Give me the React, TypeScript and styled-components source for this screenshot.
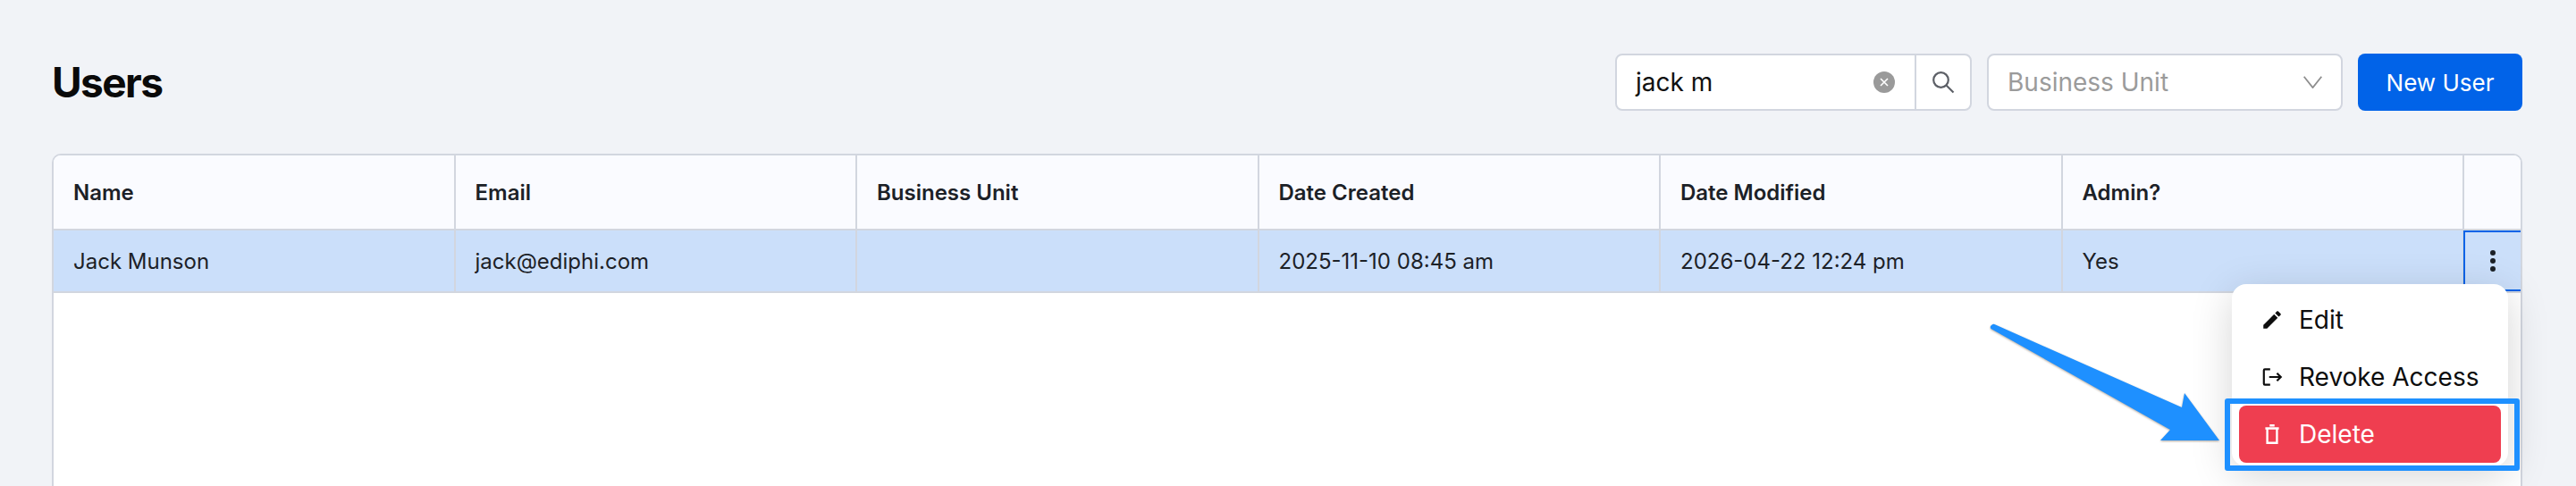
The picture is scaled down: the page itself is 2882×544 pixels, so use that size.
import React from "react";
import styled, { createGlobalStyle } from "styled-components";

const Global = createGlobalStyle`
  html, body { margin: 0; padding: 0; height: 544px; overflow: hidden; background: #f1f3f7; }
  body { font-family: Inter, "Liberation Sans", sans-serif; }
  * { box-sizing: border-box; }
`;

const Page = styled.div`
  position: relative;
  width: 2882px;
  height: 544px;
  overflow: hidden;
  padding: 60px 60px 0 58px;
`;

const Header = styled.header`
  display: flex;
  align-items: center;
  justify-content: space-between;
  height: 64px;
  margin-bottom: 48px;
`;

const Title = styled.h1`
  margin: 0;
  font-size: 46px;
  font-weight: 700;
  line-height: 1;
  letter-spacing: -1.6px;
  color: #0a0a0a;
`;

const Controls = styled.div`
  display: flex;
  align-items: stretch;
  gap: 17px;
  height: 64px;
`;

const SearchGroup = styled.div`
  display: flex;
  width: 399px;
  background: #fff;
  border: 2px solid #d2d6df;
  border-radius: 8px;
`;

const SearchField = styled.div`
  flex: 1;
  display: flex;
  align-items: center;
  justify-content: space-between;
  padding: 0 22px 0 21px;
  font-size: 28px;
  color: #111;
`;

const SearchButton = styled.div`
  width: 62px;
  display: flex;
  align-items: center;
  justify-content: center;
  border-left: 2px solid #d2d6df;
  color: #5c5f66;
`;

const ClearBadge = styled.span`
  width: 24px;
  height: 24px;
  border-radius: 50%;
  background: #9a9a9a;
  display: flex;
  align-items: center;
  justify-content: center;
`;

const SelectBox = styled.div`
  width: 398px;
  display: flex;
  align-items: center;
  justify-content: space-between;
  padding: 0 21px;
  background: #fff;
  border: 2px solid #d2d6df;
  border-radius: 8px;
  font-size: 28px;
  color: #9b9b9b;
`;

const PrimaryButton = styled.button`
  width: 184px;
  border: none;
  border-radius: 8px;
  background: #0163e8;
  color: #fff;
  font-family: inherit;
  font-size: 26px;
  font-weight: 400;
`;

const Table = styled.div`
  height: 500px;
  background: #fff;
  border: 2px solid #d2d6df;
  border-radius: 10px 10px 0 0;
  overflow: hidden;
`;

const Row = styled.div`
  display: grid;
  grid-template-columns: repeat(6, 1fr) 63px;
`;

const HeadCell = styled.div`
  height: 84px;
  display: flex;
  align-items: center;
  padding: 0 22px;
  background: #fafbff;
  border-right: 2px solid #d2d6df;
  border-bottom: 2px solid #d2d6df;
  font-size: 24px;
  font-weight: 600;
  color: #1c2127;
  &:last-child { border-right: none; }
`;

const BodyCell = styled.div`
  height: 70px;
  display: flex;
  align-items: center;
  padding: 0 22px;
  background: #cbdffa;
  border-right: 2px solid #d2d6df;
  border-bottom: 2px solid #d2d6df;
  font-size: 24px;
  color: #1c2127;
`;

const ActionCell = styled.div`
  height: 68px;
  margin-left: -1px;
  display: flex;
  flex-direction: column;
  align-items: center;
  justify-content: center;
  gap: 3px;
  background: #cbdffa;
  border: 2px solid #0163e8;
  border-right: none;
  box-shadow: 0 2px 0 #d2d6df;
`;

const Dot = styled.i`
  width: 6px;
  height: 6px;
  border-radius: 50%;
  background: #1c2127;
`;

const Menu = styled.div`
  position: absolute;
  left: 2497px;
  top: 318px;
  width: 309px;
  height: 204px;
  padding: 8px;
  background: #fff;
  border-radius: 16px;
  box-shadow: 0 10px 46px rgba(0, 0, 0, 0.17);
  display: flex;
  flex-direction: column;
`;

const MenuItem = styled.div<{ $danger?: boolean }>`
  height: 64px;
  flex: none;
  display: flex;
  align-items: center;
  gap: 17px;
  padding-left: 24px;
  border-radius: 8px;
  font-size: 28px;
  color: ${(p) => (p.$danger ? "#fff" : "#0d0d0d")};
  background: ${(p) => (p.$danger ? "#ef3e50" : "transparent")};
`;

const MenuGlyph = styled.svg`
  width: 26px;
  height: 26px;
  flex: none;
`;

const Highlight = styled.div`
  position: absolute;
  left: 2489px;
  top: 446px;
  width: 330px;
  height: 81px;
  border: 6px solid #1e90ff;
  border-radius: 3px;
`;

const ArrowLayer = styled.svg`
  position: absolute;
  left: 2210px;
  top: 350px;
  width: 290px;
  height: 160px;
  overflow: visible;
  filter: drop-shadow(0 1px 1px rgba(80, 60, 40, 0.45));
`;

export default function App() {
  const heads = ["Name", "Email", "Business Unit", "Date Created", "Date Modified", "Admin?", ""];
  const values = ["Jack Munson", "jack@ediphi.com", "", "2025-11-10 08:45 am", "2026-04-22 12:24 pm", "Yes"];
  return (
    <>
      <Global />
      <Page>
        <Header>
          <Title>Users</Title>
          <Controls>
            <SearchGroup>
              <SearchField>
                <span>jack m</span>
                <ClearBadge>
                  <svg width="12" height="12" viewBox="0 0 12 12">
                    <path d="M2 2l8 8M10 2l-8 8" stroke="#fff" strokeWidth="1.6" />
                  </svg>
                </ClearBadge>
              </SearchField>
              <SearchButton>
                <svg width="26" height="26" viewBox="0 0 26 26" fill="none" stroke="currentColor" strokeWidth="2.2">
                  <circle cx="10.5" cy="10.5" r="8.3" />
                  <path d="M16.5 16.5l8 8" />
                </svg>
              </SearchButton>
            </SearchGroup>
            <SelectBox>
              Business Unit
              <svg width="21" height="14" viewBox="0 0 21 14" fill="none" stroke="#8e8e8e" strokeWidth="1.8">
                <path d="M.7.7l9.8 12.4L20.3.7" />
              </svg>
            </SelectBox>
            <PrimaryButton>New User</PrimaryButton>
          </Controls>
        </Header>
        <Table>
          <Row>
            {heads.map((h, i) => (
              <HeadCell key={i}>{h}</HeadCell>
            ))}
          </Row>
          <Row>
            {values.map((v, i) => (
              <BodyCell key={i}>{v}</BodyCell>
            ))}
            <ActionCell>
              <Dot />
              <Dot />
              <Dot />
            </ActionCell>
          </Row>
        </Table>
        <Menu>
          <MenuItem>
            <MenuGlyph viewBox="0 0 24 24" fill="#0d0d0d">
              <path d="M3 17.25V21h3.75L17.81 9.94l-3.75-3.75L3 17.25zM20.71 7.04c.39-.39.39-1.02 0-1.41l-2.34-2.34c-.39-.39-1.02-.39-1.41 0l-1.83 1.83 3.75 3.75 1.83-1.83z" />
            </MenuGlyph>
            Edit
          </MenuItem>
          <MenuItem>
            <MenuGlyph viewBox="0 0 24 24" fill="none" stroke="#0d0d0d" strokeWidth="2">
              <path d="M10 4H4.5a1 1 0 0 0-1 1v14a1 1 0 0 0 1 1H10M9 12h12M17 8l4 4-4 4" />
            </MenuGlyph>
            Revoke Access
          </MenuItem>
          <MenuItem $danger>
            <MenuGlyph viewBox="0 0 24 24" fill="none" stroke="#fff" strokeWidth="2.2">
              <path d="M5 6h14M9.5 3h5M7 6.5V21h10V6.5" />
            </MenuGlyph>
            Delete
          </MenuItem>
        </Menu>
        <Highlight />
        <ArrowLayer viewBox="0 0 290 160">
          <path
            d="M19.5 13 C20.5 12.6 21.5 13 22 13.3 L231 106 L234 90 L273 143 L207 143 L218 131 L17.5 18 C16 16.5 17 14 19.5 13 Z"
            fill="#1e90ff"
          />
        </ArrowLayer>
      </Page>
    </>
  );
}
